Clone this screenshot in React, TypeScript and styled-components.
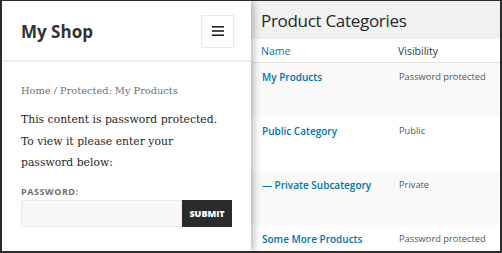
import React from "react";
import styled, { createGlobalStyle } from "styled-components";

const Global = createGlobalStyle`
  html, body { margin: 0; padding: 0; background: #fff; }
  * { box-sizing: border-box; }
`;

const Frame = styled.div`
  width: 502px;
  height: 253px;
  border: 2px solid #2b2b2b;
  border-top-width: 1px;
  display: flex;
  overflow: hidden;
  background: #fff;
`;

const ShopPanel = styled.div`
  width: 249px;
  flex: none;
  display: flex;
  flex-direction: column;
  background: #fff;
  position: relative;
  z-index: 1;
  box-shadow: 2px 0 8px rgba(0, 0, 0, 0.32);
`;

const ShopHeader = styled.header`
  height: 61px;
  flex: none;
  display: flex;
  align-items: center;
  justify-content: space-between;
  padding: 0 17px 0 19px;
  border-bottom: 2px solid #ececec;
`;

const SiteTitle = styled.h1`
  margin: 2px 0 0 0;
  font-family: "Open Sans", "Noto Sans", sans-serif;
  font-weight: 700;
  font-size: 17px;
  color: #333;
`;

const MenuButton = styled.button`
  width: 33px;
  height: 33px;
  margin-top: 1px;
  border: 1px solid #eaeaea;
  background: #fff;
  display: flex;
  align-items: center;
  justify-content: center;
  padding: 0;
`;

const ShopBody = styled.div`
  padding: 20px 19px 0 19px;
  display: flex;
  flex-direction: column;
`;

const Crumbs = styled.div`
  font-family: "DejaVu Serif", serif;
  font-size: 9.8px;
  color: #707070;
  line-height: 18px;
`;

const Notice = styled.p`
  margin: 9px 0 0 0;
  font-family: "DejaVu Serif", serif;
  font-size: 10.8px;
  color: #1f1f1f;
  line-height: 21.5px;
`;

const FieldLabel = styled.label`
  margin-top: 12px;
  font-family: "Open Sans", "Noto Sans", sans-serif;
  font-weight: 700;
  font-size: 9px;
  letter-spacing: 0.06em;
  color: #707070;
  text-transform: uppercase;
  line-height: 12px;
`;

const FieldRow = styled.div`
  margin-top: 2px;
  display: flex;
  height: 27px;
`;

const PasswordInput = styled.input`
  width: 161px;
  height: 27px;
  border: 1px solid #eaeaea;
  background: #f7f7f7;
  padding: 0 6px;
  outline: none;
`;

const SubmitButton = styled.button`
  width: 50px;
  height: 27px;
  border: 0;
  background: #2b2b2b;
  color: #fff;
  font-family: "Open Sans", "Noto Sans", sans-serif;
  font-weight: 800;
  font-size: 9px;
  text-transform: uppercase;
  padding: 0;
`;

const AdminPanel = styled.div`
  flex: 1;
  display: flex;
  flex-direction: column;
  font-family: "Open Sans", "Noto Sans", sans-serif;
`;

const AdminTitle = styled.h2`
  margin: 0;
  height: 38px;
  flex: none;
  display: flex;
  align-items: center;
  padding: 0 10px;
  background: #f1f1f1;
  font-weight: 400;
  font-size: 17px;
  letter-spacing: -0.3px;
  color: #23282d;
`;

const Table = styled.div`
  display: flex;
  flex-direction: column;
`;

const Row = styled.div<{ $shade?: boolean; $head?: boolean }>`
  display: grid;
  grid-template-columns: 137px 1fr;
  height: ${(p) => (p.$head ? "24px" : "54px")};
  padding: ${(p) => (p.$head ? "0 10px" : "6px 10px 0 11px")};
  align-content: ${(p) => (p.$head ? "center" : "start")};
  background: ${(p) => (p.$shade ? "#f9f9f9" : "#fff")};
  border-bottom: ${(p) => (p.$head ? "1px solid #e1e1e1" : "0")};
  font-size: 10.5px;
  line-height: 16px;
  white-space: nowrap;
`;

const HeadCell = styled.span<{ $link?: boolean }>`
  color: ${(p) => (p.$link ? "#0073aa" : "#32373c")};
`;

const NameCell = styled.a`
  color: #0073aa;
  font-weight: 600;
  font-size: 10px;
  text-decoration: none;
`;

const VisCell = styled.span`
  color: #555;
  font-size: 9.3px;
`;

const categories = [
  { name: "My Products", vis: "Password protected" },
  { name: "Public Category", vis: "Public" },
  { name: "— Private Subcategory", vis: "Private" },
  { name: "Some More Products", vis: "Password protected" },
];

export default function App() {
  return (
    <>
      <Global />
      <Frame>
        <ShopPanel>
          <ShopHeader>
            <SiteTitle>My Shop</SiteTitle>
            <MenuButton aria-label="Menu">
              <svg width="12" height="10" viewBox="0 0 12 10">
                <rect x="0" y="0" width="12" height="1.6" fill="#222" />
                <rect x="0" y="4.2" width="12" height="1.6" fill="#222" />
                <rect x="0" y="8.4" width="12" height="1.6" fill="#222" />
              </svg>
            </MenuButton>
          </ShopHeader>
          <ShopBody>
            <Crumbs>Home / Protected: My Products</Crumbs>
            <Notice>
              This content is password protected.
              <br />
              To view it please enter your
              <br />
              password below:
            </Notice>
            <FieldLabel>Password:</FieldLabel>
            <FieldRow>
              <PasswordInput type="password" />
              <SubmitButton>Submit</SubmitButton>
            </FieldRow>
          </ShopBody>
        </ShopPanel>
        <AdminPanel>
          <AdminTitle>Product Categories</AdminTitle>
          <Table>
            <Row $head>
              <HeadCell $link>Name</HeadCell>
              <HeadCell>Visibility</HeadCell>
            </Row>
            {categories.map((c, i) => (
              <Row key={c.name} $shade={i % 2 === 0}>
                <NameCell href="#">{c.name}</NameCell>
                <VisCell>{c.vis}</VisCell>
              </Row>
            ))}
          </Table>
        </AdminPanel>
      </Frame>
    </>
  );
}
